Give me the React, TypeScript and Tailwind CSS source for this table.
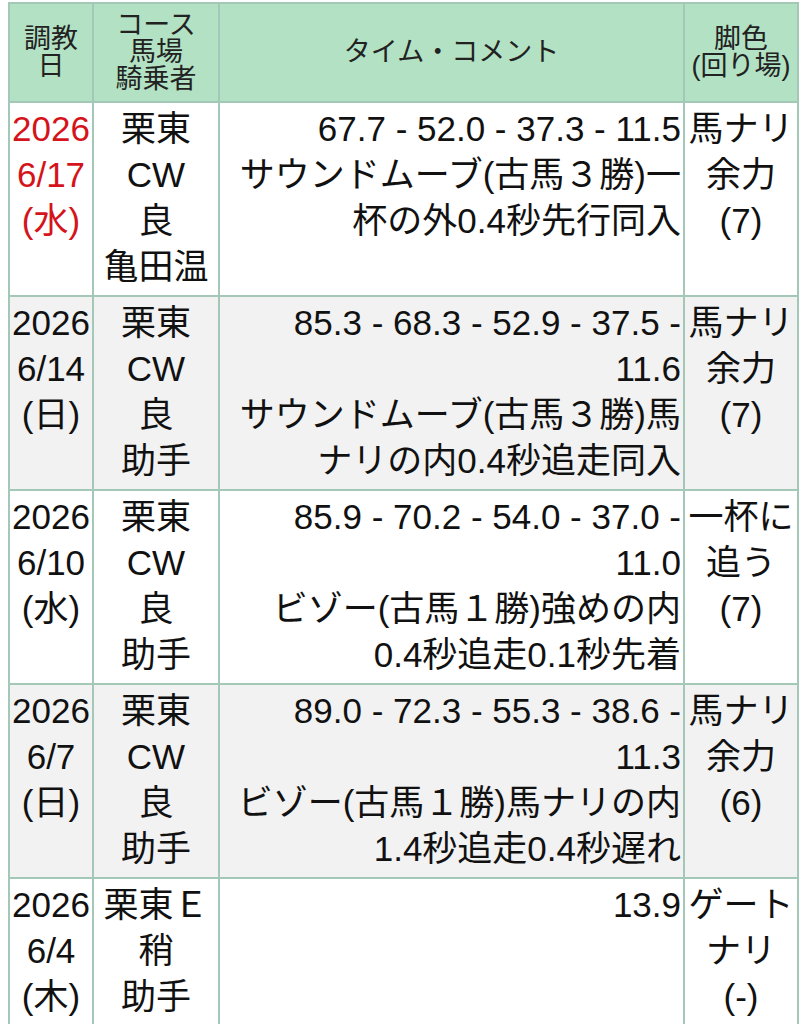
type Row = {
  date: string[]
  red?: boolean
  course: string[]
  time: string[]
  leg: string[]
  shaded?: boolean
}

const rows: Row[] = [
  {
    date: ["2026", "6/17", "(水)"],
    red: true,
    course: ["栗東", "CW", "良", "亀田温"],
    time: ["67.7 - 52.0 - 37.3 - 11.5", "サウンドムーブ(古馬３勝)一", "杯の外0.4秒先行同入"],
    leg: ["馬ナリ", "余力", "(7)"],
  },
  {
    date: ["2026", "6/14", "(日)"],
    course: ["栗東", "CW", "良", "助手"],
    time: ["85.3 - 68.3 - 52.9 - 37.5 -", "11.6", "サウンドムーブ(古馬３勝)馬", "ナリの内0.4秒追走同入"],
    leg: ["馬ナリ", "余力", "(7)"],
    shaded: true,
  },
  {
    date: ["2026", "6/10", "(水)"],
    course: ["栗東", "CW", "良", "助手"],
    time: ["85.9 - 70.2 - 54.0 - 37.0 -", "11.0", "ビゾー(古馬１勝)強めの内", "0.4秒追走0.1秒先着"],
    leg: ["一杯に", "追う", "(7)"],
  },
  {
    date: ["2026", "6/7", "(日)"],
    course: ["栗東", "CW", "良", "助手"],
    time: ["89.0 - 72.3 - 55.3 - 38.6 -", "11.3", "ビゾー(古馬１勝)馬ナリの内", "1.4秒追走0.4秒遅れ"],
    leg: ["馬ナリ", "余力", "(6)"],
    shaded: true,
  },
  {
    date: ["2026", "6/4", "(木)"],
    course: ["栗東Ｅ", "稍", "助手"],
    time: ["13.9"],
    leg: ["ゲート", "ナリ", "(-)"],
  },
]

function Lines({ items }: { items: string[] }) {
  return (
    <>
      {items.map((t, i) => (
        <div key={i} className="whitespace-nowrap">
          {t}
        </div>
      ))}
    </>
  )
}

export default function App() {
  const th = "border-2 border-[#a4c8b7] bg-[#b2e1c3] px-[2px] py-[8px] text-center align-middle font-normal text-[27px] leading-[27px] text-[#222]"
  const td = "border-2 border-[#a4c8b7] px-[2px] pt-[3px] pb-[5px] align-top text-[35px] leading-[46px]"

  return (
    <div
      className="min-h-screen bg-white pl-[8px] pt-[2px] text-[#111]"
      style={{ fontFamily: '"Liberation Sans", "Noto Sans CJK JP", sans-serif' }}
    >
      <table className="w-[789px] table-fixed border-collapse">
        <colgroup>
          <col className="w-[84px]" />
          <col className="w-[126px]" />
          <col className="w-[465px]" />
          <col className="w-[114px]" />
        </colgroup>
        <thead>
          <tr>
            <th className={th}>
              調教
              <br />日
            </th>
            <th className={th}>
              コース
              <br />
              馬場
              <br />
              騎乗者
            </th>
            <th className={th}>タイム・コメント</th>
            <th className={th}>
              脚色
              <br />
              (回り場)
            </th>
          </tr>
        </thead>
        <tbody>
          {rows.map((r, i) => (
            <tr key={i} className={r.shaded ? "bg-[#f2f2f2]" : "bg-white"}>
              <td className={`${td} text-center ${r.red ? "text-[#d4141a]" : ""}`}>
                <Lines items={r.date} />
              </td>
              <td className={`${td} text-center`}>
                <Lines items={r.course} />
              </td>
              <td className={`${td} text-right`}>
                <Lines items={r.time} />
              </td>
              <td className={`${td} text-center`}>
                <Lines items={r.leg} />
              </td>
            </tr>
          ))}
        </tbody>
      </table>
    </div>
  )
}
